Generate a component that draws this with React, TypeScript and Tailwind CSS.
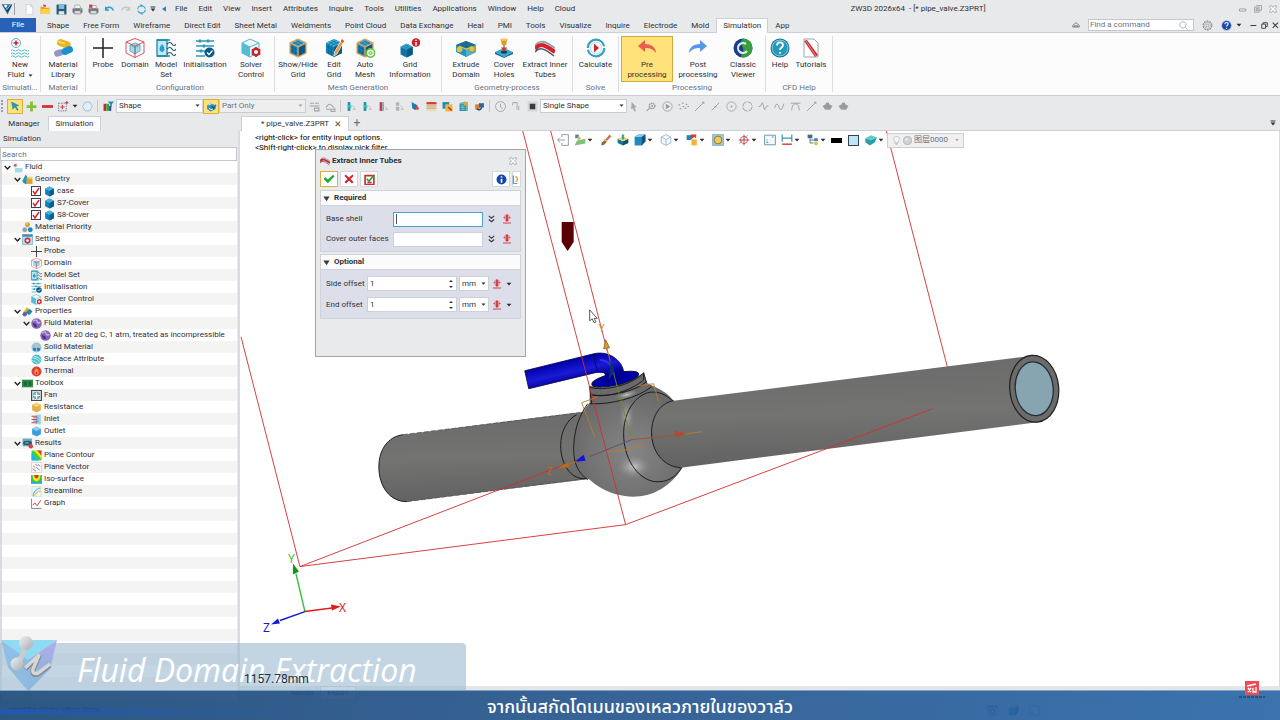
import { useState } from 'react';
import type { ReactNode } from 'react';

/* ------------------------------------------------------------------ */
/* Icons, all on a 20 x 20 grid                                        */
/* ------------------------------------------------------------------ */

const cube = (
  <>
    <path d="M10 1 18 5v10l-8 4-8-4V5z" fill="#1283b8" />
    <path d="M10 1 18 5l-8 4-8-4z" fill="#3fb4de" />
    <path d="M10 9 18 5v10l-8 4z" fill="#0b5c8c" />
  </>
);

const gridCube = (
  <>
    {cube}
    <path d="M2 8.3 10 12.300 18 8.300M2 11.700 10 15.700 18 11.700M4.700 6.400v10M7.300 7.700v10M12.700 7.700v10M15.300 6.400v10M4.700 3.700 12.700 7.700M7.300 2.300 15.300 6.300M15.300 3.700 7.300 7.700M12.700 2.300 4.700 6.300" stroke="#0a4f78" strokeWidth=".5" fill="none" />
  </>
);

const cubeEdge = <path d="M10 1 18 5v10l-8 4-8-4V5zM2 5l8 4 8-4M10 9v10" stroke="#e8a55a" strokeWidth="1.300" fill="none" />;

const icons: Record<string, ReactNode> = {
  appLogo: (
    <>
      <path d="M1 2h18l-8 17z" fill="#2d6f9e" />
      <path d="M4 4h4l3 6 4-6h3l-7 12z" fill="#123a55" />
      <path d="M5 3l5 8 6-8" stroke="#9fd8ef" strokeWidth="1.500" fill="none" />
      <circle cx="8" cy="5" r="2.500" fill="#e6eef3" />
    </>
  ),
  page: <path d="M4 1h8l4 4v14H4zM12 1v4h4" fill="#fff" stroke="#b7bcc4" />,
  open: (
    <>
      <path d="M1 5h6l2 2h8v11H1z" fill="#e5a60d" />
      <path d="M3 9h16l-3 9H1z" fill="#fcd144" />
      <path d="M5 1l6 1-1 4-3-2z" fill="#e0342c" />
    </>
  ),
  save: (
    <>
      <path d="M1 1h18v18H1z" fill="#2c5878" />
      <path d="M5 1h10v8H5z" fill="#7fc1dc" />
      <path d="M5 13h10v6H5z" fill="#dce7ed" />
    </>
  ),
  print: (
    <>
      <path d="M5 2h9l2 6H5z" fill="#f5f6f7" stroke="#7b8086" />
      <path d="M1 8h18v8H1z" fill="#73787e" />
      <path d="M4 12h12v6H4z" fill="#d9dcdf" stroke="#5c6167" />
      <circle cx="16" cy="10" r="1.200" fill="#7dd36c" />
    </>
  ),
  plot: (
    <>
      <path d="M5 3h10v5H5z" fill="#f5f6f7" stroke="#7b8086" />
      <path d="M1 8h18v8H1z" fill="#73787e" />
      <path d="M4 12h12v6H4z" fill="#d9dcdf" stroke="#5c6167" />
      <path d="M2 1h6v6H2z" fill="#dd3f3f" />
    </>
  ),
  undo: <path d="M3 11C5 4 14 4 17 12M3 5v6h6" stroke="#2e9ecb" strokeWidth="2.600" fill="none" />,
  redo: <path d="M17 11C15 4 6 4 3 12M17 5v6h-6" stroke="#c3c7cc" strokeWidth="2.600" fill="none" />,
  regen: (
    <>
      <circle cx="10" cy="10" r="7" stroke="#37a3cc" strokeWidth="2" strokeDasharray="8 3" fill="none" />
      <path d="M8 0l5 3-5 3zM12 20l-5-3 5-3z" fill="#37a3cc" />
    </>
  ),
  overflow: <path d="M4 4h12v2H4zM4 9h12l-6 7z" fill="#333" />,
  backTri: <path d="M15 3v14L5 10z" fill="#0c8ce0" />,
  newFluid: (
    <>
      <circle cx="6" cy="5" r="4.500" fill="#fff" stroke="#5aa9c9" />
      <path d="M6 2.500v5M3.500 5h5" stroke="#d62228" strokeWidth="1.600" />
      <path d="M1 12.500q1.500-1.500 3 0t3 0 3 0 3 0 3 0 3 0M1 15.500q1.500-1.500 3 0t3 0 3 0 3 0 3 0 3 0M1 18.500q1.500-1.500 3 0t3 0 3 0 3 0 3 0 3 0" stroke="#4db9c9" fill="none" />
    </>
  ),
  material: (
    <>
      <rect x="4" y="2" width="14" height="7" rx="3.500" transform="rotate(18 10 5)" fill="#e7b623" />
      <rect x="1" y="12" width="9" height="6.500" rx="3.200" transform="rotate(-18 5 15)" fill="#8f97c5" />
      <rect x="8" y="9" width="12" height="7" rx="3.500" transform="rotate(-22 14 12)" fill="#1d8fd1" />
      <path d="M5 3.500l7 2" stroke="#f8dd70" strokeWidth="1.500" />
    </>
  ),
  probe: <path d="M10 0v20M0 10h20" stroke="#222" strokeWidth="1.500" />,
  domain: (
    <>
      <path d="M10 5l5 2v6l-5 3-5-3V7z" fill="#9fdff0" stroke="#3aa3c4" strokeWidth=".8" />
      <path d="M5 7l5 2.500L15 7M10 9.500V16" stroke="#3aa3c4" strokeWidth=".8" fill="none" />
      <path d="M10 0.500 19 4v11l-9 4.500L1 15V4zM1 4l9 4 9-4M10 8v11.500" stroke="#d9434a" strokeWidth=".9" fill="none" />
    </>
  ),
  modelSet: (
    <>
      <path d="M1 2h10v16H1z" fill="#bfe9f4" stroke="#2187ad" strokeWidth="1.300" />
      <path d="M1 2h13M1 18h13" stroke="#2187ad" strokeWidth="1.300" />
      <path d="M6 6c5 6 1 8 0 8s-5-2 0-8z" fill="#2b9ccc" />
      <path d="M11 6q3-3 5 0t4 0M11 11q3-3 5 0t4 0M11 16q3-3 5 0t4 0" stroke="#17506b" strokeWidth="1.200" fill="none" />
    </>
  ),
  initialise: (
    <>
      <path d="M1 3h18M1 8h18M1 13h10M1 18h9" stroke="#3097b9" strokeWidth="1.300" />
      <path d="M5 1.500v3M13 1.500v3M9 6.500v3M6 11.500v3" stroke="#3097b9" strokeWidth="2.500" />
      <circle cx="14.500" cy="14.500" r="5" fill="#0b5a8a" />
      <path d="M12 14.500l2 2 3.500-4" stroke="#fff" strokeWidth="1.300" fill="none" />
    </>
  ),
  solver: (
    <>
      <path d="M9 1l9 4v9l-9 5-8-4V5z" fill="#eafafd" stroke="#56b4ca" />
      <path d="M1 5l8 4v10l-8-4z" fill="#53bdd5" />
      <path d="M1 5l8 4 9-4" stroke="#56b4ca" fill="none" />
      <circle cx="15" cy="14" r="3.200" fill="#fff" stroke="#cf202b" strokeWidth="2.400" />
      <path d="M15 9v2M15 17v2M10.700 11.500l1.700 1M17.600 15.500l1.700 1M10.700 16.500l1.700-1M17.600 12.500l1.700-1" stroke="#cf202b" strokeWidth="1.600" />
    </>
  ),
  showGrid: (
    <>
      {gridCube}
      {cubeEdge}
    </>
  ),
  editGrid: (
    <>
      {gridCube}
      <path d="M18 1l2 2-7 13-3 2 .5-4z" fill="#f0952c" stroke="#fff" strokeWidth=".7" />
      <path d="M18 1l2 2-1 2-2-2z" fill="#d44a2c" />
    </>
  ),
  autoMesh: (
    <>
      {gridCube}
      {cubeEdge}
      <circle cx="15.500" cy="15" r="4.200" fill="#e6f6dc" stroke="#5cc332" strokeWidth="1.500" />
      <circle cx="15.500" cy="15" r="1.400" fill="none" stroke="#5cc332" />
    </>
  ),
  gridInfo: (
    <>
      <g transform="translate(-1 5) scale(.76)">{gridCube}</g>
      <circle cx="16" cy="4.500" r="4.300" fill="#d3202a" />
      <path d="M16 1.700v1.300M16 4v3.500" stroke="#fff" strokeWidth="1.500" />
    </>
  ),
  extrude: (
    <>
      <path d="M0 7l10-4 10 4v7l-10 5-10-5z" fill="#2893bd" />
      <path d="M0 7l10-4 10 4-10 4z" fill="#1b6b93" />
      <path d="M10 11v8l10-5V7z" fill="#4fb1d0" />
      <circle cx="3.500" cy="11.500" r="2.800" fill="#e9c33e" />
      <circle cx="16" cy="11" r="3" fill="#e9c33e" stroke="#94781c" strokeWidth=".6" />
      <path d="M3 8l7 3 6-2" stroke="#e9c33e" strokeWidth="1.200" fill="none" />
    </>
  ),
  cover: (
    <>
      <path d="M10 10l9 4-9 5-9-5z" fill="#36a6cc" />
      <path d="M1 14l9 5 9-5v2l-9 4-9-4z" fill="#15698d" />
      <ellipse cx="10" cy="14" rx="3" ry="1.500" fill="#0d3c55" />
      <path d="M10 7v5M8 10l2 3 2-3z" stroke="#d23a22" strokeWidth="1.200" fill="#d23a22" />
      <path d="M6.500 1h7l-1.500 6h-4z" fill="#dd9a2a" />
      <ellipse cx="10" cy="1.500" rx="3.500" ry="1.300" fill="#f5c865" />
    </>
  ),
  extract: (
    <>
      <path d="M0 8C5 1 10 3 20 10" stroke="#8fa4ae" strokeWidth="1.800" fill="none" />
      <path d="M0 11C5 4 10 7 20 14" stroke="#d8222b" strokeWidth="4" fill="none" />
      <path d="M0 14C5 8 10 11 19 18" stroke="#46565f" strokeWidth="1.500" fill="none" />
    </>
  ),
  calculate: (
    <>
      <circle cx="10" cy="10" r="8.300" fill="#fff" stroke="#2fa2c6" strokeWidth="2.200" strokeDasharray="24 2" />
      <circle cx="10" cy="10" r="5.700" fill="#f6fbfd" stroke="#9bd3e4" strokeWidth=".7" />
      <path d="M8 5.500l5 4.500-5 4.500z" fill="#d8232a" />
    </>
  ),
  pre: <path d="M1 8l7-6v4c7 0 11 4 11 9-3-4-6-5-11-5v4z" fill="#ec5f4f" />,
  post: <path d="M19 8l-7-6v4c-7 0-11 4-11 9 3-4 6-5 11-5v4z" fill="#5b95ea" />,
  viewer: (
    <>
      <circle cx="10" cy="10" r="9.500" fill="#1b3d8c" />
      <path d="M10 .500a9.500 9.500 0 0 1 0 19c-5-2 2-4 0-9.500S7 4 10 .500z" fill="#36a03b" />
      <path d="M13 6a5 5 0 1 0 1 7" stroke="#dfe8f4" strokeWidth="2.200" fill="none" />
    </>
  ),
  helpBig: (
    <>
      <circle cx="10" cy="10" r="9.500" fill="#14718f" />
      <circle cx="10" cy="10" r="8" fill="#2599b9" stroke="#a6dbe7" strokeWidth=".8" />
      <path d="M7 7.500c0-4 6-4 6-.5 0 2.500-3 2.500-3 5M10 14v1.800" stroke="#fff" strokeWidth="1.800" fill="none" />
    </>
  ),
  tutorials: (
    <>
      <path d="M3 1h10l4 4v14H3z" fill="#fff" stroke="#9aa6b0" />
      <path d="M3 3l3-1 11 15-3 2z" fill="#cc2a32" />
      <path d="M5 3l10 15" stroke="#f0a0a3" strokeWidth=".8" />
    </>
  ),
  cursor: <path d="M3 2l13 6-5 2 4 6-2 1-4-6-4 4z" fill="#1d9bc7" stroke="#0f6e92" strokeWidth=".7" />,
  plus: <path d="M7.500 1h5v6.500H19v5h-6.500V19h-5v-6.500H1v-5h6.500z" fill="#86bf3a" />,
  minus: <path d="M0 7.500h20v5H0z" fill="#cf3136" />,
  boxPlus: (
    <>
      <path d="M1 4h14v14H1z" fill="none" stroke="#5c7f93" strokeWidth="1.500" strokeDasharray="3 1.500" />
      <path d="M8 7v8M4 11h8M16 0v6M13 3h6" stroke="#d23a40" strokeWidth="2" />
    </>
  ),
  hexagon: <path d="M6 2h8l5 8-5 8H6l-5-8z" fill="#e3eef4" stroke="#7fb2cd" strokeWidth="1.300" />,
  filterBars: (
    <>
      <path d="M1 5h5v13H1z" fill="#c42b2b" />
      <path d="M6 5h5v13H6z" fill="#3aa23c" />
      <path d="M11 9h4v9h-4z" fill="#274fb0" />
      <path d="M9 1h11l-4 5v5l-3-2V6z" fill="#1b8dbb" />
    </>
  ),
  partFilter: (
    <>
      <path d="M2 8l8-5 9 4-2 8-9 4-6-5z" fill="#2a8bb4" />
      <path d="M5 8q6-6 11-1M15 12q-5 6-10 1" stroke="#fff" strokeWidth="1.800" fill="none" />
      <path d="M9 10l8 0-3 6z" fill="#195b80" />
    </>
  ),
  align: <path d="M2 4h7M11 4h7M1 9h18M10 13h8v5h-8z" stroke="#a0a4a9" strokeWidth="2" fill="none" />,
  lock: <path d="M2 12q6-12 14 0M2 15h16M11 15v4h7v-6" stroke="#a0a4a9" strokeWidth="2" fill="none" />,
  pickBar: (
    <>
      <path d="M3 2h5v16H3z" fill="#218fb5" />
      <path d="M12 8l5 8M12 15h5" stroke="#b9bec3" strokeWidth="1.600" />
      <path d="M3 8h7v4H3z" fill="#51c0ac" />
    </>
  ),
  pickBarRed: (
    <>
      <path d="M3 2h5v16H3z" fill="#cf3944" />
      <path d="M8 2h3v16H8z" fill="#6bb6d1" />
      <path d="M13 10l5 6M13 15h5" stroke="#b9bec3" strokeWidth="1.600" />
    </>
  ),
  pickBarGray: <path d="M4 3h5v5H4zM4 11h5v6H4zM12 8l5 8M12 15h5" stroke="#a0a4a9" fill="#b6babf" />,
  pickOff: (
    <>
      <path d="M3 2l11 6-4 9-6-4z" fill="#1c7fae" />
      <path d="M10 6l7 8-5 3z" fill="#d63a44" />
    </>
  ),
  rows: (
    <>
      <path d="M1 2h18v16H1z" fill="#f2d8ad" />
      <path d="M1 2h18v4H1z" fill="#d53b2f" />
      <path d="M1 9h18M1 13h18" stroke="#7a7f85" />
    </>
  ),
  copyObj: (
    <>
      <path d="M1 2h12v12H1z" fill="#1f8ab5" />
      <path d="M6 6h13v13H6z" fill="#f4b642" />
      <path d="M11 11l7 6" stroke="#d2352c" strokeWidth="3" />
    </>
  ),
  calc: (
    <>
      <path d="M3 3l12-2 3 3v14H3z" fill="#69bb9d" />
      <path d="M3 6h11v12H3z" fill="#2a8dad" />
      <path d="M11 2h7v6h-7z" fill="#e8a13a" />
      <path d="M5 9h7M5 12h7M5 15h7" stroke="#d3edf4" />
    </>
  ),
  link: (
    <>
      <path d="M2 6h8v9H2z" fill="#e07f2e" />
      <path d="M9 4h9v8H9z" fill="#2f639c" />
      <path d="M5 14q6 5 9-2" stroke="#183e66" strokeWidth="2.500" fill="none" />
    </>
  ),
  clock: <path d="M10 1a9 9 0 1 0 .1 0zM10 5v6l4 3" stroke="#9a9ea3" strokeWidth="1.500" fill="none" />,
  chain: <path d="M3 3h8v13M3 3v5M14 9v8" stroke="#b0b4b8" strokeWidth="2" fill="none" />,
  stop: (
    <>
      <path d="M1 1h18v18H1z" fill="#d3d5d8" />
      <path d="M5 5h10v10H5z" fill="#3a3a3a" />
    </>
  ),
  arrowPick: <path d="M3 2l9 9-4 1 3 6-3 1-3-6-3 2z" fill="#a5a9ae" />,
  gear: (
    <>
      <circle cx="11" cy="9" r="5" stroke="#989ca1" strokeWidth="2.500" strokeDasharray="3 1" fill="none" />
      <circle cx="11" cy="9" r="1.800" fill="#989ca1" />
      <path d="M1 18l6-5" stroke="#989ca1" strokeWidth="2" />
    </>
  ),
  playRing: (
    <>
      <circle cx="10" cy="10" r="8.500" stroke="#989ca1" strokeWidth="1.500" fill="none" />
      <path d="M7 5l8 5-8 5z" fill="#989ca1" />
    </>
  ),
  dots: <path d="M1 7h3M7 4h3M8 10h3M14 6h3M3 14h3M12 13h3M17 10h3" stroke="#989ca1" strokeWidth="2.200" />,
  slash: <path d="M2 18L18 2M15 2h3v3" stroke="#989ca1" strokeWidth="1.700" fill="none" />,
  slashDot: <path d="M3 17L17 3M8 10l4 1" stroke="#989ca1" strokeWidth="1.700" />,
  ringDot: (
    <>
      <circle cx="10" cy="10" r="8.500" stroke="#989ca1" strokeWidth="1.400" fill="none" />
      <circle cx="10" cy="10" r="1.800" fill="#989ca1" />
    </>
  ),
  ring: <circle cx="10" cy="10" r="8.500" stroke="#989ca1" strokeWidth="1.600" strokeDasharray="11 2" fill="none" />,
  zig: <path d="M1 10h3l4-7 4 13 4-7h3" stroke="#989ca1" strokeWidth="1.500" fill="none" />,
  wave: <path d="M1 13q4-14 8-2t9-6" stroke="#989ca1" strokeWidth="1.600" fill="none" />,
  tangent: <path d="M1 4h18M3 17Q4 5 10 5t7 12" stroke="#989ca1" strokeWidth="1.500" fill="none" />,
  bowl: <path d="M1 9l9-5 9 5-4 7H6zM7 3h6v4H7z" fill="#989ca1" />,
  fluidSmall: (
    <>
      <circle cx="6" cy="6" r="5" fill="#e0eef2" />
      <circle cx="6" cy="6" r="2.500" fill="#d35861" />
      <path d="M5 11h14v8H5z" fill="#9fdce6" />
    </>
  ),
  geometry: (
    <>
      <path d="M7 1l6 11c0 8-12 8-12 0z" fill="#1a94c4" />
      <path d="M8 8h11v10H8z" fill="#d6a52e" />
      <path d="M8 8l3-3h8v3z" fill="#f1ce68" />
    </>
  ),
  cube,
  balls: (
    <>
      <circle cx="10" cy="5" r="4.500" fill="#d3a029" />
      <circle cx="5" cy="14" r="4.500" fill="#99a1a8" />
      <circle cx="15" cy="14" r="4.500" fill="#1f88bd" />
      <circle cx="9" cy="3.500" r="1.500" fill="#f7e2a1" />
    </>
  ),
  setting: (
    <>
      <path d="M1 1h18v18H1z" fill="#bfe3ef" stroke="#3d8db0" />
      <path d="M1 1h18v4H1z" fill="#3d8db0" />
      <circle cx="10" cy="12" r="4" stroke="#cf2c36" strokeWidth="3" fill="#fff" />
    </>
  ),
  properties: (
    <>
      <path d="M2 12L9 2l5 5-6 8z" fill="#e3ad2d" />
      <path d="M7 12l7-7 5 5-6 7z" fill="#1c87bd" />
      <circle cx="5" cy="15" r="4" fill="#5667a8" />
    </>
  ),
  purple: (
    <>
      <circle cx="10" cy="10" r="9.500" fill="#8563bb" />
      <path d="M4 6q6-5 7 0t6 2" stroke="#cbb6e6" strokeWidth="2.500" fill="none" />
      <path d="M3 9l6 2 2 6-5-1z" fill="#4b2c81" />
    </>
  ),
  solid: (
    <>
      <circle cx="10" cy="10" r="9" fill="#8dc6e6" />
      <circle cx="10" cy="6" r="3" fill="#f1c449" />
      <path d="M4 11h5v5H4zM11 11h5v5h-5z" fill="#3772a8" />
    </>
  ),
  surface: (
    <>
      <circle cx="10" cy="10" r="9" fill="#4ebfc9" />
      <path d="M2 7q9 0 14 8M5 4q9 1 13 7M2 12q6 0 10 6" stroke="#d5f3f5" strokeWidth="1.500" fill="none" />
    </>
  ),
  thermal: (
    <>
      <circle cx="10" cy="10" r="9" fill="#dd3e37" />
      <path d="M10 4c7 6 4 12 0 12s-7-6 0-12z" fill="#f79a4a" />
      <path d="M10 10c3 3 1 5 0 5s-3-2 0-5z" fill="#c42220" />
    </>
  ),
  toolbox: (
    <>
      <path d="M0 3h20v14H0z" fill="#2f8a4c" />
      <path d="M3 6h6v8H3zM12 6h5v8h-5z" fill="#1b6a36" />
    </>
  ),
  fan: (
    <>
      <path d="M1 1h18v18H1z" fill="#d8dee2" stroke="#3f4a52" strokeWidth="2" />
      <circle cx="10" cy="10" r="6" fill="#7ac8df" stroke="#33596a" />
      <path d="M10 4v12M4 10h12" stroke="#fff" strokeWidth="1.800" />
    </>
  ),
  resistance: (
    <>
      <path d="M10 1l8 4v10l-8 4-8-4V5z" fill="#e2b04a" />
      <path d="M10 1l8 4-8 4-8-4z" fill="#f6d381" />
    </>
  ),
  inlet: (
    <>
      <path d="M9 2l9-1v18l-9-1z" fill="#9ad2ec" />
      <path d="M1 4h10M1 10h10M1 16h10" stroke="#d04048" strokeWidth="2" />
      <path d="M4 7h9M4 13h9" stroke="#3a6c9b" strokeWidth="1.500" />
    </>
  ),
  outlet: (
    <>
      <path d="M10 1l8 4v10l-8 4-8-4V5z" fill="#3b9edb" />
      <path d="M10 1l8 4-8 4-8-4z" fill="#8fcdf1" />
    </>
  ),
  results: (
    <>
      <path d="M1 1h17v14H1z" fill="#6ba6c8" />
      <ellipse cx="10" cy="9" rx="8" ry="4" fill="#2b4f7d" />
      <ellipse cx="9" cy="9" rx="4" ry="2" fill="#49a955" />
      <circle cx="16" cy="15" r="4" fill="#e23b3f" />
    </>
  ),
  contour: (
    <>
      <path d="M1 1h18v18H1z" fill="#3fd03a" />
      <path d="M5 1h14v15z" fill="#f1e423" />
      <path d="M11 1h8v9z" fill="#ee3a1d" />
      <path d="M1 5v14h13z" fill="#24b4e0" />
    </>
  ),
  vector: (
    <>
      <path d="M1 1h18v18H1z" fill="#fff" stroke="#b5bac0" />
      <path d="M3 12l6 5M4 7l4 3M8 4l4 3" stroke="#d23b43" strokeWidth="1.500" />
      <path d="M12 4l5 4M10 10l6 5" stroke="#4f66c8" strokeWidth="1.500" />
    </>
  ),
  iso: (
    <>
      <path d="M0 2h20v16H0z" fill="#2fa9e0" />
      <path d="M0 2h20v6q-2 8-10 8T0 8z" fill="#3dcb3b" />
      <path d="M3 2h14q0 11-7 11T3 2z" fill="#f3e625" />
      <path d="M6 2h8q0 6-4 6T6 2z" fill="#e9331d" />
    </>
  ),
  streamline: (
    <>
      <path d="M2 1h16v18H2z" fill="#f2f6f8" stroke="#bcd1da" />
      <path d="M4 18q0-10 13-15" stroke="#59b8d8" strokeWidth="2" fill="none" />
      <path d="M6 18q2-7 12-9" stroke="#e8bd4a" strokeWidth="2" fill="none" />
    </>
  ),
  graph: (
    <>
      <path d="M1 1v18h18" stroke="#6a7379" strokeWidth="1.500" fill="none" />
      <path d="M3 13l4-4 4 5 7-10" stroke="#d23b43" strokeWidth="1.800" fill="none" />
    </>
  ),
  anchor: (
    <>
      <path d="M2 17h16v2H2zM6 12l4 4 4-4z" fill="#d3414a" />
      <circle cx="10" cy="7" r="6" fill="#ee8f95" />
      <path d="M10 1v13" stroke="#c02c37" strokeWidth="3" />
      <path d="M3 7h3M14 7h3" stroke="#c94d55" strokeWidth="2" />
    </>
  ),
  check: <path d="M1 10l3-3 4 4 9-8 2 3L8 17z" fill="#21a732" />,
  cross: <path d="M3 1l7 6 7-6 2 3-6 6 6 6-3 3-6-6-6 6-3-3 6-6-6-6z" fill="#d3222b" />,
  checkBox: (
    <>
      <path d="M2 3h16v16H2z" fill="#fff" stroke="#cd2a33" strokeWidth="3" />
      <path d="M5 9l4 4L19 2" stroke="#27a337" strokeWidth="3" fill="none" />
      <path d="M6 14h8v3H6z" fill="#cd2a33" />
    </>
  ),
  info: (
    <>
      <circle cx="10" cy="10" r="9" fill="#1346a8" />
      <path d="M10 4v2.500M10 8.500V16" stroke="#fff" strokeWidth="3" />
    </>
  ),
  sheet: (
    <>
      <path d="M3 1v18h9" stroke="#56a6c4" strokeWidth="3" fill="none" />
      <path d="M8 3q9 7 0 12" stroke="#e29a3d" strokeWidth="3" fill="none" />
    </>
  ),
  exit: <path d="M8 1h11v18H8v-4M8 5V1M13 10H1M5 6l-4 4 4 4" stroke="#8e9398" strokeWidth="1.500" fill="none" />,
  dims: (
    <>
      <path d="M2 1h6v6H2z" fill="#4a83a8" />
      <circle cx="8" cy="7" r="3" fill="#e5b94f" />
      <path d="M1 19l4-8 14-3v8z" fill="#7ec37b" />
    </>
  ),
  brush: (
    <>
      <path d="M9 9l7-8 3 3-8 8z" fill="#d9685f" />
      <path d="M3 14l6-5 3 3-5 6-5 1z" fill="#8b6349" />
      <path d="M7 9l5 4" stroke="#f3cb6b" strokeWidth="2" />
    </>
  ),
  box3: (
    <>
      <path d="M1 8l9 4v7l-9-4z" fill="#1674a0" />
      <path d="M19 8l-9 4v7l9-4z" fill="#0b5374" />
      <path d="M1 8l9-4 9 4-9 4z" fill="#eedb4e" />
      <path d="M8 1h4v6l-2 3-2-3z" fill="#3fa0a0" />
    </>
  ),
  shaded: (
    <>
      <path d="M1 5l6-4h12v11l-6 7H1z" fill="#2288bd" />
      <path d="M1 5l6-4h12l-6 4z" fill="#8dcbe9" />
      <path d="M13 5l6-4v11l-6 7z" fill="#12527c" />
    </>
  ),
  wireCube: <path d="M10 1l8 4v10l-8 4-8-4V5zM2 5l8 4 8-4M10 9v10" fill="#f1f8fb" stroke="#6e9bb2" />,
  swap: (
    <>
      <path d="M1 2h8v8H1z" fill="#2586b5" />
      <path d="M8 1h9v6l-3-2-6 4z" fill="#d5392f" />
      <path d="M9 9h9v10H9z" fill="#efb63c" />
    </>
  ),
  light: (
    <>
      <path d="M1 1h18v18H1z" fill="#a8cadb" stroke="#5c8ca8" />
      <circle cx="10" cy="10" r="6.500" fill="#f1cd4b" stroke="#7c7347" strokeWidth="1.500" />
    </>
  ),
  target: (
    <>
      <circle cx="10" cy="10" r="6" stroke="#d3505a" strokeWidth="1.500" fill="none" />
      <path d="M10 1v18M1 10h18" stroke="#c3333d" strokeWidth="1.500" />
      <path d="M2 16L16 2" stroke="#5798b5" strokeWidth="1.500" />
    </>
  ),
  frame: (
    <>
      <path d="M1 2h18v16H1z" fill="#f3f9fb" stroke="#5d93ac" strokeWidth="1.500" />
      <path d="M4 14h3M4 10h2M13 5h3" stroke="#5d93ac" strokeWidth="1.800" />
    </>
  ),
  measure: (
    <>
      <path d="M2 1v12M18 1v12M2 7h16" stroke="#3b93b8" strokeWidth="2" />
      <path d="M2 17h16" stroke="#d53e3e" strokeWidth="2.500" />
    </>
  ),
  tree: (
    <>
      <path d="M1 1h8v6H1z" fill="#476c86" />
      <path d="M5 7v8h6M5 10h8" stroke="#476c86" strokeWidth="1.500" fill="none" />
      <path d="M12 7h6v5h-6z" fill="#3a8ab2" />
      <circle cx="15" cy="16" r="3.200" fill="#e8bf39" />
    </>
  ),
  layers: (
    <>
      <path d="M10 9l10-3-4 8-8 5-7-5-1-6z" fill="#2d9aa5" />
      <path d="M10 2l10 4-10 5L0 7z" fill="#5ad0c4" />
    </>
  ),
  bulb: <path d="M6 12C1 6 5 1 10 1s9 5 4 11v3H6zM7 17h6M8 19h4" stroke="#a4a8ac" strokeWidth="1.300" fill="#f4f4f4" />,
  sphere: (
    <>
      <circle cx="10" cy="10" r="9" fill="#cfd1d3" stroke="#a4a8ac" strokeWidth="1.500" />
      <circle cx="8" cy="8" r="3" fill="#ececec" />
    </>
  ),
  search: <path d="M8.500 1.500a7 7 0 1 0 .1 0zM14 14l5 5" stroke="#8b9299" strokeWidth="1.500" fill="none" />,
  gearOutline: (
    <>
      <circle cx="10" cy="10" r="8" stroke="#85898e" strokeWidth="2" strokeDasharray="3.500 1.500" fill="none" />
      <circle cx="10" cy="10" r="5.500" stroke="#85898e" fill="none" />
      <circle cx="10" cy="10" r="2.500" stroke="#85898e" fill="none" />
    </>
  ),
  helpBlue: (
    <>
      <circle cx="10" cy="10" r="9.500" fill="#9fb4dd" />
      <circle cx="10" cy="10" r="8" fill="#1845ab" />
      <path d="M7 7.500c0-4 6-4 6-.5 0 2.500-3 2.500-3 5M10 14v2" stroke="#fff" strokeWidth="2" fill="none" />
    </>
  ),
  home: <path d="M2 15h16v-4l-8-7-8 7zM6 15v-3h8v3" stroke="#55595e" strokeWidth="1.800" fill="none" />,
  winMin: <path d="M1 10h16v5H1z" stroke="#85898e" strokeWidth="2" fill="#fff" />,
  winMax: <path d="M6 1h13v12h-5M1 5h12v13H1zM5 9h5v5H5z" stroke="#85898e" strokeWidth="1.800" fill="none" />,
  winClose: <path d="M2 2h5l3 4 3-4h5v4l-4 4 4 4v4h-5l-3-4-3 4H2v-4l4-4-4-4z" stroke="#85898e" strokeWidth="1.600" fill="#fff" />,
  docMin: <path d="M1 10h17" stroke="#3a3d41" strokeWidth="3" />,
  docMax: <path d="M6 6V2h12v11h-4M2 6h11v12H2z" stroke="#3a3d41" strokeWidth="2.600" fill="none" />,
  docClose: <path d="M2 2l15 15M17 2L2 17" stroke="#3a3d41" strokeWidth="3" />,
  tabClose: <path d="M2 2l15 15M17 2L2 17" stroke="#7a6636" strokeWidth="4" />,
  doubleDown: <path d="M4 2l6 5 6-5M4 10l6 5 6-5" stroke="#333a45" strokeWidth="2.500" fill="none" />,
  spin: <path d="M6 6h8l-4-4zM6 14h8l-4 4z" fill="#333" />,
  caret: <path d="M2 6h16l-8 9z" fill="#2b2b2b" />,
  collapse: <path d="M1 4h18l-9 14z" fill="#3a3d41" />,
  chevron: <path d="M2 6l8 8 8-8" stroke="#222" strokeWidth="4" fill="none" />,
};

function Icon({ name, className = 'size-3' }: { name: string; className?: string }) {
  return (
    <svg viewBox="0 0 20 20" className={`shrink-0 ${className}`} aria-hidden="true">
      {icons[name]}
    </svg>
  );
}

/* ------------------------------------------------------------------ */
/* Title bar and ribbon                                                */
/* ------------------------------------------------------------------ */

const quickActions = ['page', 'open', 'save', 'print', 'plot', 'undo', 'redo', 'regen'];
const menus = ['File', 'Edit', 'View', 'Insert', 'Attributes', 'Inquire', 'Tools', 'Utilities', 'Applications', 'Window', 'Help', 'Cloud'];
const ribbonTabs = ['Shape', 'Free Form', 'Wireframe', 'Direct Edit', 'Sheet Metal', 'Weldments', 'Point Cloud', 'Data Exchange', 'Heal', 'PMI', 'Tools', 'Visualize', 'Inquire', 'Electrode', 'Mold', 'Simulation', 'App'];

type RibbonItem = { icon: string; lines: string[]; width: string; menu?: boolean; active?: boolean };

const ribbonGroups: { title: string; items: RibbonItem[] }[] = [
  { title: 'Simulati...', items: [{ icon: 'newFluid', lines: ['New', 'Fluid'], width: 'w-9', menu: true }] },
  { title: 'Material', items: [{ icon: 'material', lines: ['Material', 'Library'], width: 'w-10' }] },
  {
    title: 'Configuration',
    items: [
      { icon: 'probe', lines: ['Probe'], width: 'w-[30px]' },
      { icon: 'domain', lines: ['Domain'], width: 'w-[34px]' },
      { icon: 'modelSet', lines: ['Model', 'Set'], width: 'w-7' },
      { icon: 'initialise', lines: ['Initialisation'], width: 'w-[50px]' },
      { icon: 'solver', lines: ['Solver', 'Control'], width: 'w-[42px]' },
    ],
  },
  {
    title: 'Mesh Generation',
    items: [
      { icon: 'showGrid', lines: ['Show/Hide', 'Grid'], width: 'w-[42px]' },
      { icon: 'editGrid', lines: ['Edit', 'Grid'], width: 'w-[30px]' },
      { icon: 'autoMesh', lines: ['Auto', 'Mesh'], width: 'w-8' },
      { icon: 'gridInfo', lines: ['Grid', 'Information'], width: 'w-[58px]' },
    ],
  },
  {
    title: 'Geometry-process',
    items: [
      { icon: 'extrude', lines: ['Extrude', 'Domain'], width: 'w-11' },
      { icon: 'cover', lines: ['Cover', 'Holes'], width: 'w-8' },
      { icon: 'extract', lines: ['Extract Inner', 'Tubes'], width: 'w-[50px]' },
    ],
  },
  { title: 'Solve', items: [{ icon: 'calculate', lines: ['Calculate'], width: 'w-[41px]' }] },
  {
    title: 'Processing',
    items: [
      { icon: 'pre', lines: ['Pre', 'processing'], width: 'w-[52px]', active: true },
      { icon: 'post', lines: ['Post', 'processing'], width: 'w-[50px]' },
      { icon: 'viewer', lines: ['Classic', 'Viewer'], width: 'w-10' },
    ],
  },
  {
    title: 'CFD Help',
    items: [
      { icon: 'helpBig', lines: ['Help'], width: 'w-6' },
      { icon: 'tutorials', lines: ['Tutorials'], width: 'w-[38px]' },
    ],
  },
];

function TitleBar() {
  return (
    <header className="grid h-[18px] grid-cols-[26fr_auto_9fr] items-center">
      <div className="flex items-center">
        <Icon name="appLogo" className="mx-px size-3" />
        <span className="mr-2 h-3 w-px bg-gray-400" />
        <div className="flex gap-1">
          {quickActions.map((name) => (
            <button key={name} type="button" aria-label={name} className="flex w-3 justify-center">
              <Icon name={name} className="size-[11px]" />
            </button>
          ))}
        </div>
        <button type="button" aria-label="Customize quick access" className="ml-[2px]"><Icon name="overflow" className="size-2" /></button>
        <button type="button" aria-label="Collapse menu" className="ml-[3px]"><Icon name="backTri" className="size-2" /></button>
        <nav className="ml-[7px] flex gap-[11px]">
          {menus.map((item) => (
            <button key={item} type="button">{item}</button>
          ))}
        </nav>
      </div>
      <h1 className="whitespace-pre">{'ZW3D 2026x64  - [* pipe_valve.Z3PRT]'}</h1>
      <div className="flex items-center justify-end gap-[7px] pr-[3px]">
        <button type="button" aria-label="Minimize"><Icon name="winMin" className="size-2" /></button>
        <button type="button" aria-label="Restore"><Icon name="winMax" className="size-2" /></button>
        <button type="button" aria-label="Close"><Icon name="winClose" className="size-2" /></button>
      </div>
    </header>
  );
}

function RibbonTabs({ active, onSelect }: { active: string; onSelect: (tab: string) => void }) {
  return (
    <div className="flex h-[15px] items-stretch border-b border-[#cdd0d6]">
      <button type="button" className="w-9 bg-[#2762b8] text-white">File</button>
      <nav className="ml-1 flex">
        {ribbonTabs.map((tab) => (
          <button
            key={tab}
            type="button"
            onClick={() => onSelect(tab)}
            className={`-mb-px border-x border-t px-[6px] ${tab === active ? 'border-[#cdd0d6] bg-[#fcfcfc]' : 'border-transparent'}`}
          >
            {tab}
          </button>
        ))}
      </nav>
      <div className="ml-auto flex items-center pr-px">
        <button type="button" aria-label="Collapse ribbon" className="mr-2"><Icon name="home" className="size-2" /></button>
        <label className="mr-2 flex h-3 w-[106px] items-center border border-[#c4c7cc] bg-white px-px">
          <input aria-label="Find a command" placeholder="Find a command" className="w-full min-w-0 outline-none placeholder:text-gray-500" />
          <Icon name="search" className="mr-1 size-[9px]" />
        </label>
        <button type="button" aria-label="Settings" className="mr-2"><Icon name="gearOutline" className="size-[11px]" /></button>
        <button type="button" aria-label="Help" className="mr-1 flex items-center gap-1"><Icon name="helpBlue" className="size-[11px]" /><Icon name="caret" className="size-[6px]" /></button>
        <div className="ml-1 flex items-center gap-1">
          <button type="button" aria-label="Minimize document"><Icon name="docMin" className="size-[7px]" /></button>
          <button type="button" aria-label="Restore document"><Icon name="docMax" className="size-[7px]" /></button>
          <button type="button" aria-label="Close document"><Icon name="docClose" className="size-[7px]" /></button>
        </div>
      </div>
    </div>
  );
}

function Ribbon() {
  return (
    <div className="flex h-[63px] border-b border-[#cdd0d6] bg-[#fcfcfc]">
      {ribbonGroups.map((group) => (
        <section key={group.title} className="my-[3px] flex flex-col items-center border-r border-[#dcdee2] px-[2px]">
          <div className="flex flex-1">
            {group.items.map((item) => (
              <button
                key={item.lines.join(' ')}
                type="button"
                className={`flex flex-col items-center whitespace-nowrap leading-[10px] ${item.width} h-[46px] border ${item.active ? 'border-[#d3a93f] bg-[#ffe27a]' : 'border-transparent'}`}
              >
                <Icon name={item.icon} className="mt-px mb-[2px] size-5" />
                {item.lines.map((line, i) => (
                  <span key={line} className="flex items-center gap-[3px]">
                    {line}
                    {item.menu && i === 1 && <Icon name="caret" className="size-[5px]" />}
                  </span>
                ))}
              </button>
            ))}
          </div>
          <h2 className="leading-[9px] text-gray-500">{group.title}</h2>
        </section>
      ))}
    </div>
  );
}

/* ------------------------------------------------------------------ */
/* Selection toolbar                                                   */
/* ------------------------------------------------------------------ */

function ToolButton({ name, active }: { name: string; active?: boolean }) {
  return (
    <button
      type="button"
      aria-label={name}
      className={`flex h-[15px] w-4 shrink-0 items-center justify-center ${active ? 'border border-[#dcae3a] bg-[#ffe27a]' : ''}`}
    >
      <Icon name={name} className="size-[11px]" />
    </button>
  );
}

function Picker({ label, value, disabled }: { label: string; value: string; disabled?: boolean }) {
  return (
    <span className="relative flex h-[14px] w-[87px] shrink-0">
      <select
        aria-label={label}
        disabled={disabled}
        className={`w-full appearance-none border border-[#c9ccd1] px-[2px] outline-none ${disabled ? 'bg-[#eeeeef] text-gray-500' : 'bg-white'}`}
      >
        <option>{value}</option>
      </select>
      <Icon name="caret" className={`pointer-events-none absolute top-1 right-[3px] size-[5px] ${disabled ? 'opacity-40' : ''}`} />
    </span>
  );
}

const Divider = () => <span className="mx-[2px] h-3 w-px shrink-0 bg-[#c5c8cd]" />;

function SelectionToolbar() {
  return (
    <div className="flex h-5 items-center overflow-hidden pl-px">
      <span className="mr-1 h-3 border-l-2 border-dotted border-gray-400" />
      <ToolButton name="cursor" active />
      <ToolButton name="plus" />
      <ToolButton name="minus" />
      <ToolButton name="boxPlus" />
      <button type="button" aria-label="More pick options" className="flex w-2 justify-center"><Icon name="caret" className="size-[6px]" /></button>
      <ToolButton name="hexagon" />
      <Divider />
      <ToolButton name="filterBars" />
      <Picker label="Filter" value="Shape" />
      <ToolButton name="partFilter" active />
      <Picker label="Scope" value="Part Only" disabled />
      {['align', 'lock'].map((name) => <ToolButton key={name} name={name} />)}
      <Divider />
      {['pickBar', 'pickBar', 'pickBarRed', 'pickBarGray', 'pickOff', 'rows', 'copyObj', 'calc', 'link'].map((name, i) => (
        <ToolButton key={i} name={name} />
      ))}
      <Divider />
      {['clock', 'chain', 'stop'].map((name) => <ToolButton key={name} name={name} />)}
      <Picker label="Pick mode" value="Single Shape" />
      {['arrowPick', 'gear', 'playRing', 'dots', 'slash', 'slashDot', 'ringDot', 'ring', 'zig', 'wave', 'tangent', 'slash', 'bowl', 'bowl'].map((name, i) => (
        <ToolButton key={i} name={name} />
      ))}
    </div>
  );
}

/* ------------------------------------------------------------------ */
/* Simulation tree                                                     */
/* ------------------------------------------------------------------ */

type TreeRow = { level: 0 | 1 | 2 | 3; icon: string; label: string; open?: boolean; checked?: boolean };

const treeRows: TreeRow[] = [
  { level: 0, icon: 'fluidSmall', label: 'Fluid', open: true },
  { level: 1, icon: 'geometry', label: 'Geometry', open: true },
  { level: 2, icon: 'cube', label: 'case', checked: true },
  { level: 2, icon: 'cube', label: 'S7-Cover', checked: true },
  { level: 2, icon: 'cube', label: 'S8-Cover', checked: true },
  { level: 1, icon: 'balls', label: 'Material Priority' },
  { level: 1, icon: 'setting', label: 'Setting', open: true },
  { level: 2, icon: 'probe', label: 'Probe' },
  { level: 2, icon: 'domain', label: 'Domain' },
  { level: 2, icon: 'modelSet', label: 'Model Set' },
  { level: 2, icon: 'initialise', label: 'Initialisation' },
  { level: 2, icon: 'solver', label: 'Solver Control' },
  { level: 1, icon: 'properties', label: 'Properties', open: true },
  { level: 2, icon: 'purple', label: 'Fluid Material', open: true },
  { level: 3, icon: 'purple', label: 'Air at 20 deg C, 1 atm, treated as incompressible' },
  { level: 2, icon: 'solid', label: 'Solid Material' },
  { level: 2, icon: 'surface', label: 'Surface Attribute' },
  { level: 2, icon: 'thermal', label: 'Thermal' },
  { level: 1, icon: 'toolbox', label: 'Toolbox', open: true },
  { level: 2, icon: 'fan', label: 'Fan' },
  { level: 2, icon: 'resistance', label: 'Resistance' },
  { level: 2, icon: 'inlet', label: 'Inlet' },
  { level: 2, icon: 'outlet', label: 'Outlet' },
  { level: 1, icon: 'results', label: 'Results', open: true },
  { level: 2, icon: 'contour', label: 'Plane Contour' },
  { level: 2, icon: 'vector', label: 'Plane Vector' },
  { level: 2, icon: 'iso', label: 'Iso-surface' },
  { level: 2, icon: 'streamline', label: 'Streamline' },
  { level: 2, icon: 'graph', label: 'Graph' },
];

const indent = ['', 'pl-[10px]', 'pl-[19px]', 'pl-7'];

function TreeItem({ row }: { row: TreeRow }) {
  const [checked, setChecked] = useState(true);
  const content = (
    <>
      <Icon name={row.icon} className="mr-[2px] size-[11px]" />
      {row.label}
    </>
  );
  return (
    <li className={`flex h-3 items-center whitespace-nowrap ${indent[row.level]}`}>
      {row.checked ? (
        <label className="flex items-center pl-[10px]">
          <span className="relative mr-[3px] flex size-[10px]">
            <input
              type="checkbox"
              checked={checked}
              onChange={() => setChecked(!checked)}
              className="size-[10px] appearance-none border border-gray-700 bg-white"
            />
            {checked && (
              <svg viewBox="0 0 10 10" className="pointer-events-none absolute inset-0" aria-hidden="true">
                <path d="M2 5l2 3 4-6" stroke="#d8222b" strokeWidth="1.500" fill="none" />
              </svg>
            )}
          </span>
          {content}
        </label>
      ) : (
        <>
          <span className="flex w-[10px] justify-center">
            {row.open && (
              <button type="button" aria-label={`Collapse ${row.label}`}><Icon name="chevron" className="size-[7px]" /></button>
            )}
          </span>
          {content}
        </>
      )}
    </li>
  );
}

function Sidebar() {
  return (
    <aside className="flex w-60 shrink-0 flex-col border-r-2 border-[#d9dbe0] pr-px">
      <h2 className="flex h-4 items-center pl-[3px]">Simulation</h2>
      <input
        aria-label="Search"
        placeholder="Search"
        className="h-[14px] border border-[#c4c7cc] bg-white px-px outline-none placeholder:text-gray-500"
      />
      <ul className="flex-1 border-l-2 border-[#d9dbe0] bg-[repeating-linear-gradient(#ffffff_0_12px,#f4f4f3_12px_24px)]">
        {treeRows.map((row, i) => <TreeItem key={i} row={row} />)}
      </ul>
    </aside>
  );
}

/* ------------------------------------------------------------------ */
/* 3D view                                                             */
/* ------------------------------------------------------------------ */

function Scene() {
  return (
    <svg viewBox="240 131 1040 555" preserveAspectRatio="xMinYMin meet" className="absolute inset-0 h-full w-full" role="img" aria-label="Pipe valve model">
      <defs>
        <linearGradient id="pipe" x1="0" y1="0" x2=".08" y2="1">
          <stop offset="0" stopColor="#6a6a6a" />
          <stop offset=".55" stopColor="#737372" />
          <stop offset="1" stopColor="#626262" />
        </linearGradient>
        <radialGradient id="ball" gradientUnits="userSpaceOnUse" cx="632" cy="452" r="62">
          <stop offset="0" stopColor="#858585" />
          <stop offset=".6" stopColor="#757575" />
          <stop offset="1" stopColor="#6a6a6a" />
        </radialGradient>
        <radialGradient id="shine">
          <stop offset="0" stopColor="#cfcfcf" stopOpacity=".9" />
          <stop offset="1" stopColor="#8a8a8a" stopOpacity="0" />
        </radialGradient>
        <linearGradient id="lever" gradientUnits="userSpaceOnUse" x1="560" y1="362" x2="565" y2="384">
          <stop offset="0" stopColor="#0000a4" />
          <stop offset=".55" stopColor="#1a1ad8" />
          <stop offset="1" stopColor="#00008c" />
        </linearGradient>
      </defs>

      {/* left pipe */}
      <path d="M403 435 592 411V479L407 502C390 502 379 487 379 467 379 450 388 437 403 435z" fill="url(#pipe)" />
      <path d="M403 435C388 437 379 450 379 467 379 487 390 502 407 502" stroke="#1d1d1d" fill="none" />
      <path d="M403 435 580 413M407 502 585 479" stroke="#555" strokeWidth=".8" strokeDasharray="5 2" fill="none" />

      {/* valve body */}
      <path d="M590 386Q616 392 644 373L647 383 655 387Q667 392 674 401L683 468Q664 497 633 497 608 496 590 480L577 470 574 438Q579 415 590 403z" fill="url(#ball)" />
      <ellipse cx="627" cy="417" rx="8" ry="18" fill="url(#shine)" opacity=".7" />
      <ellipse cx="634" cy="467" rx="17" ry="12" fill="url(#shine)" />
      <ellipse cx="627" cy="395" rx="12" ry="4" fill="url(#shine)" transform="rotate(-15 627 395)" />
      <path d="M577 415C567 420 561 432 561 446 561 463 570 480 586 479M588 404C578 418 574 433 574 450 574 463 578 473 588 480" stroke="#1d1d1d" fill="none" />

      {/* right pipe */}
      <path d="M674 401 1033 356 1042 422 681 468C662 466 652 451 652 433 652 416 661 403 674 401z" fill="url(#pipe)" />
      <path d="M674 401C661 403 652 416 652 433 652 452 664 467 681 468M673 401C664 393 656 391 648 393 633 398 624 415 624 434 624 458 637 479 655 482 667 483 676 478 682 468" stroke="#1d1d1d" fill="none" />
      <ellipse cx="1035" cy="389" rx="24.500" ry="33.500" transform="rotate(-5 1035 389)" fill="#6c6b6a" stroke="#1f1f1f" strokeWidth="1.200" />
      <ellipse cx="1035" cy="389" rx="19" ry="27" transform="rotate(-5 1035 389)" fill="#87a4b1" stroke="#1f2d36" strokeWidth="1.300" />

      {/* bonnet and lever */}
      <path d="M589 387C604 393 635 384 644 373V380C632 391 606 399 591 395M591 395C610 398 636 391 647 382M590 404C612 405 638 398 652 387M590 387 592 404M644 373 647 383" stroke="#1d1d1d" fill="none" />
      <ellipse cx="615.500" cy="379.500" rx="24" ry="6" transform="rotate(-13 615 379)" fill="#0000a8" stroke="#101038" />
      <path d="M525 371 594 354C611 350 624 363 624 373L622 381 605 383Q607 376 604 373L596 373 529 389z" fill="url(#lever)" />
      <path d="M525 371 594 354C611 350 624 363 624 373M604 373Q600 371 595 373L529 389 525 371M595 354Q594 363 598 371" stroke="#060646" strokeWidth=".8" fill="none" />
      <path d="M600 360Q612 361 614 374" stroke="#3030e8" strokeWidth="2" fill="none" />

      {/* domain box */}
      <path d="M523 131 626 525M551 131 608 353M887 131 948 367M241 337 300 567M300 567 626 525M626 525 933 409M300 567 567 464" stroke="#d42c2c" strokeWidth=".9" fill="none" />

      {/* sketch and local axes */}
      <path d="M595 437 582 403 598 397M638 386 654 384 659 402M608 452Q632 451 645 444M607 348 613 370M680 435 702 432" stroke="#c07a22" strokeWidth=".9" fill="none" />
      <path d="M613 370 632 440" stroke="#6f8a2e" strokeWidth=".9" />
      <path d="M632 440 590 457" stroke="#6a4b6e" />
      <path d="M632 440 680 435" stroke="#a3542c" />
      <path d="M675 431 687 434 676 438z" fill="#b04a35" />
      <path d="M604 349 606 340 610 348z" fill="#d79a2d" stroke="#6f4a0c" strokeWidth=".6" />
      <path d="M575 462 584 455 586 461z" fill="#1212e0" />
      <path d="M560 468 568 463 569 467z" fill="#b86e11" stroke="#b86e11" />
      <path d="M568 465 577 462" stroke="#b86e11" />
      <path d="M611 360 609 380 615 372z" fill="#0b2f77" />
      <text x="599" y="332" fontSize="10" fill="#c98a2b" className="font-['Noto_Sans']">Y</text>
      <text x="547" y="475" fontSize="10" fill="#b86e11" className="font-['Noto_Sans']">Z</text>

      <path d="M562 222h12v20l-6 9-6-9z" fill="#5a0004" />

      {/* orientation triad */}
      <path d="M305 612 296 574" stroke="#2fc12f" strokeWidth="1.400" />
      <path d="M293 564 299 572 293 575z" fill="#159515" />
      <path d="M305 612 332 608.500" stroke="#e01818" strokeWidth="1.400" />
      <path d="M341 607 331 605 332 611z" fill="#e01818" />
      <path d="M305 612 280 621" stroke="#1a1ad6" strokeWidth="1.400" />
      <path d="M271 625 278 619 280 624z" fill="#1a1ad6" />
      <g fontSize="12" className="font-['Noto_Sans']">
        <text x="288" y="563" fill="#2fc12f">Y</text>
        <text x="339" y="612" fill="#e01818">X</text>
        <text x="263" y="632" fill="#1a1ad6">Z</text>
      </g>

      {/* mouse pointer */}
      <path d="M590 310v11l2.500-2 2 4 1.800-1-1.800-3.500h3z" fill="#fff" stroke="#333" strokeWidth=".8" />
    </svg>
  );
}

const viewTools: { icon: string; menu?: boolean }[] = [
  { icon: 'exit' },
  { icon: 'dims', menu: true },
  { icon: 'brush' },
  { icon: 'box3' },
  { icon: 'shaded', menu: true },
  { icon: 'wireCube', menu: true },
  { icon: 'swap', menu: true },
  { icon: 'light', menu: true },
  { icon: 'target', menu: true },
  { icon: 'frame' },
  { icon: 'measure', menu: true },
  { icon: 'tree', menu: true },
];

function ViewToolbar() {
  return (
    <div className="absolute top-px left-[314px] flex h-4 items-center">
      {viewTools.map((tool) => (
        <button key={tool.icon} type="button" aria-label={tool.icon} className={`flex items-center gap-px px-[3px] ${tool.menu ? 'w-[26px]' : 'w-[17px]'}`}>
          <Icon name={tool.icon} className="size-3" />
          {tool.menu && <Icon name="caret" className="size-[6px]" />}
        </button>
      ))}
      <button type="button" aria-label="Line colour" className="ml-px mr-[6px] h-[5px] w-[11px] bg-black" />
      <button type="button" aria-label="Face colour" className="mr-[6px] size-[11px] border border-slate-700 bg-[#bfe4f6]" />
      <button type="button" aria-label="Layers" className="mr-[3px] flex items-center gap-px">
        <Icon name="layers" className="size-3" />
        <Icon name="caret" className="size-[6px]" />
      </button>
      <div className="flex h-[15px] w-[77px] items-center gap-[2px] border border-[#cfcfd1] bg-[#f0f0f0] px-1 text-gray-500">
        <Icon name="bulb" className="size-[9px]" />
        <Icon name="sphere" className="size-[9px]" />
        <select aria-label="Layer" disabled className="min-w-0 flex-1 appearance-none font-['Roboto','Noto_Sans_CJK_SC',sans-serif]">
          <option>图层0000</option>
        </select>
        <Icon name="caret" className="size-1 opacity-50" />
      </div>
    </div>
  );
}

/* ------------------------------------------------------------------ */
/* Extract Inner Tubes form                                            */
/* ------------------------------------------------------------------ */

function FormHeading({ children }: { children: ReactNode }) {
  return (
    <h3 className="flex h-4 items-center gap-1 border border-[#cfd2d9] bg-[#fbfbfb] px-[2px] font-bold">
      <Icon name="collapse" className="size-[7px]" />
      {children}
    </h3>
  );
}

function PickField({ id, label, focused }: { id: string; label: string; focused?: boolean }) {
  return (
    <div className="flex h-5 items-center pr-2 pl-[5px]">
      <label htmlFor={id} className="w-[67px] whitespace-nowrap">{label}</label>
      <span className={`flex h-[15px] min-w-0 flex-1 items-center border bg-white px-[2px] ${focused ? 'border-[#4a9fe0]' : 'border-[#cdd0d6]'}`}>
        {focused && <span className="h-[10px] w-px bg-gray-600" />}
        <input id={id} className="w-full min-w-0 outline-none" />
      </span>
      <button type="button" aria-label={`Expand ${label}`} className="ml-1"><Icon name="doubleDown" className="size-[9px]" /></button>
      <button type="button" aria-label={`Pick ${label}`} className="ml-[6px]"><Icon name="anchor" className="size-[10px]" /></button>
    </div>
  );
}

function OffsetField({ id, label }: { id: string; label: string }) {
  return (
    <div className="flex h-[15px] items-center pr-1 pl-[5px]">
      <label htmlFor={id} className="w-[41px] whitespace-nowrap">{label}</label>
      <span className="flex h-full w-[90px] items-center border border-[#cdd0d6] bg-white pl-[2px]">
        <input id={id} defaultValue="1" className="w-full min-w-0 outline-none" />
        <Icon name="spin" className="size-[10px]" />
      </span>
      <span className="relative ml-[2px] flex h-full w-[30px]">
        <select aria-label={`${label} unit`} className="w-full appearance-none border border-[#cdd0d6] bg-white px-[2px] outline-none">
          <option>mm</option>
        </select>
        <Icon name="caret" className="pointer-events-none absolute top-[5px] right-[3px] size-[5px]" />
      </span>
      <button type="button" aria-label={`${label} options`} className="ml-[3px] flex items-center gap-1">
        <Icon name="anchor" className="size-[10px]" />
        <Icon name="caret" className="size-[6px]" />
      </button>
    </div>
  );
}

function ExtractDialog() {
  const actionClass = 'flex h-4 w-[18px] items-center justify-center border bg-white';
  return (
    <section className="absolute top-[18px] left-[75px] w-[211px] border border-[#a0a4ad] bg-[#e9eaec] px-1 pb-[37px]" aria-label="Extract Inner Tubes">
      <div className="flex h-[21px] items-center gap-[2px]">
        <Icon name="extract" className="size-[10px]" />
        <h2 className="font-bold">Extract Inner Tubes</h2>
        <button type="button" aria-label="Close" className="mr-1 ml-auto"><Icon name="winClose" className="size-2" /></button>
      </div>
      <div className="mb-[3px] flex gap-[2px]">
        <button type="button" aria-label="OK" className={`${actionClass} border-[#e0b03c]`}><Icon name="check" className="size-3" /></button>
        <button type="button" aria-label="Cancel" className={`${actionClass} border-[#d5d7db]`}><Icon name="cross" className="size-[10px]" /></button>
        <button type="button" aria-label="Apply" className={`${actionClass} border-[#d5d7db]`}><Icon name="checkBox" className="size-[11px]" /></button>
        <button type="button" aria-label="Information" className={`${actionClass} ml-auto border-[#d5d7db]`}><Icon name="info" className="size-[11px]" /></button>
        <button type="button" aria-label="Panel" className="flex h-4 w-[9px] items-center justify-center border border-[#d5d7db] bg-white"><Icon name="sheet" className="size-[9px]" /></button>
      </div>
      <FormHeading>Required</FormHeading>
      <div className="mb-[2px] border border-t-0 border-[#cfd2d9] bg-[#dcdfea] pt-[3px] pb-[2px]">
        <PickField id="base-shell" label="Base shell" focused />
        <PickField id="cover-faces" label="Cover outer faces" />
      </div>
      <FormHeading>Optional</FormHeading>
      <div className="flex flex-col gap-[6px] border border-t-0 border-[#cfd2d9] bg-[#dcdfea] pt-[6px] pb-[6px]">
        <OffsetField id="side-offset" label="Side offset" />
        <OffsetField id="end-offset" label="End offset" />
      </div>
    </section>
  );
}

/* ------------------------------------------------------------------ */
/* Video title and subtitle                                            */
/* ------------------------------------------------------------------ */

function TitleBanner() {
  return (
    <div className="absolute bottom-[29px] left-0 flex h-12 w-[466px] items-center rounded-tr bg-[#9bb9d0]/60">
      <svg viewBox="0 0 58 56" className="-mt-2 h-14 w-[58px] shrink-0" aria-hidden="true">
        <defs>
          <linearGradient id="gemRight" x1="0" y1="0" x2="0" y2="1">
            <stop offset="0" stopColor="#b3aee8" />
            <stop offset="1" stopColor="#7fb2da" />
          </linearGradient>
          <linearGradient id="metal" x1="0" y1="0" x2="1" y2="1">
            <stop offset="0" stopColor="#f0f0f0" />
            <stop offset="1" stopColor="#a9acb2" />
          </linearGradient>
        </defs>
        <path d="M1 5h56L28 25z" fill="#8fdcf2" />
        <path d="M1 5l27 20v31L8 32z" fill="#8fbfe6" />
        <path d="M57 5L28 25v31l22-22z" fill="url(#gemRight)" />
        <path d="M28 25L8 32l20 24 16-17z" fill="#8dbbdd" opacity=".8" />
        <path d="M25 9l-3 12-5 8" stroke="#c9ccd0" strokeWidth="5" fill="none" />
        <circle cx="26" cy="8" r="7" fill="url(#metal)" />
        <circle cx="17" cy="29" r="6.500" fill="url(#metal)" />
        <path d="M25 34L39 21 33 35Q32 41 38 39L50 30" stroke="#85898f" strokeWidth="5" fill="none" strokeLinejoin="round" />
        <path d="M25 33L39 20 33 34Q32 40 38 38L50 29" stroke="#d5d6d8" strokeWidth="3.500" fill="none" strokeLinejoin="round" />
      </svg>
      <p className="mt-[5px] ml-[19px] whitespace-nowrap font-['Open_Sans','Noto_Sans',sans-serif] text-[32px] leading-none text-white italic">Fluid Domain Extraction</p>
    </div>
  );
}

function Subtitle() {
  return (
    <div className="absolute inset-x-0 bottom-0 flex h-[30px] items-center justify-center border-t border-[#7fa3c4] bg-linear-to-r from-[#1c4b7a]/92 via-[#285890]/92 to-[#2b69a9]/92">
      <span className="absolute bottom-[6px] left-0 h-[5px] w-[290px] bg-linear-to-r from-[#1f58bd]/80 to-transparent" />
      <p className="relative pt-[5px] font-['Noto_Sans_Thai','Noto_Sans',sans-serif] text-[18px] leading-none font-medium text-white">จากนั้นสกัดโดเมนของเหลวภายในของวาล์ว</p>
    </div>
  );
}

export default function App() {
  const [ribbonTab, setRibbonTab] = useState('Simulation');

  return (
    <div className="relative flex min-h-screen flex-col overflow-hidden bg-[#e8e9eb] font-['Roboto','Noto_Sans',sans-serif] text-[8px] leading-[12px] text-[#2e3136]">
      <TitleBar />
      <RibbonTabs active={ribbonTab} onSelect={setRibbonTab} />
      <Ribbon />
      <SelectionToolbar />

      {/* panel tabs and open documents */}
      <div className="flex h-[15px] items-stretch">
        <div className="flex w-60 shrink-0">
          <button type="button" className="w-12">Manager</button>
          <button type="button" className="w-[53px] border border-b-0 border-[#cdd0d6] bg-[#fcfcfc]">Simulation</button>
        </div>
        <div className="flex flex-1 items-stretch border-b border-[#cdd0d6]">
          <div className="ml-px -mb-px flex w-[108px] items-center justify-center gap-[6px] border-x border-t border-[#cdd0d6] bg-white pl-3">
            * pipe_valve.Z3PRT
            <button type="button" aria-label="Close pipe_valve.Z3PRT"><Icon name="tabClose" className="size-[6px]" /></button>
          </div>
          <button type="button" aria-label="New document" className="w-4 text-[12px] text-gray-500">+</button>
          <button type="button" aria-label="Document list" className="mr-[3px] ml-auto"><Icon name="overflow" className="size-2" /></button>
        </div>
      </div>

      <main className="flex flex-1">
        <Sidebar />
        <div className="flex min-w-0 flex-1 flex-col">
          <div className="relative flex-1 overflow-hidden border-r border-[#d9dbe0] bg-white">
            <Scene />
            <p className="relative pt-[2px] pl-[15px] leading-[10px] text-black">
              &lt;right-click&gt; for entity input options.
              <br />
              &lt;Shift-right-click&gt; to display pick filter.
            </p>
            <ViewToolbar />
            <ExtractDialog />
          </div>
          <div className="flex h-[14px] items-center bg-[#e4e5e7] pl-11">
            <button type="button" className="w-9">Model</button>
            <button type="button" className="h-full w-9 border border-gray-300 bg-white">Fluid1</button>
          </div>
        </div>
      </main>
      <footer className="flex h-5 items-center justify-between pl-2">
        <span>&lt;middle-click&gt; when done.</span>
        <span className="mr-[240px] flex gap-[10px] text-sky-800"><Icon name="setting" className="size-[11px]" /><Icon name="shaded" className="size-[11px]" /><Icon name="frame" className="size-[11px]" /></span>
      </footer>

      <TitleBanner />
      <p className="absolute bottom-[33px] left-[244px] text-[12px] leading-4 text-[#24303a]">1157.78mm</p>
      <Subtitle />
      <svg viewBox="0 0 26 18" className="absolute right-[15px] bottom-[21px] h-[18px] w-[26px]" aria-hidden="true">
        <path d="M6 0h14v14H6z" fill="#ee4b54" />
        <path d="M8 5l9-2M9 7l3 4M12 7l-3 4M14 7v4h3V6" stroke="#fff" strokeWidth="1.300" fill="none" />
        <path d="M0 16h26" stroke="#26303b" strokeDasharray="3 1" />
      </svg>
    </div>
  );
}
